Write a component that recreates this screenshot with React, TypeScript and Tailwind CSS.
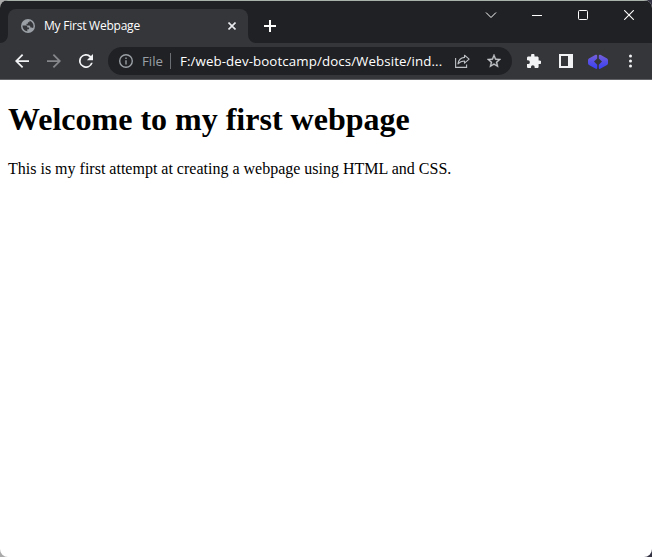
import React from 'react';

function Icon({ box, className, children }: { box: string; className: string; children: React.ReactNode }) {
  return (
    <svg viewBox={box} className={`block shrink-0 ${className}`} fill="currentColor">
      {children}
    </svg>
  );
}

function TabStrip() {
  return (
    <div className="flex h-[43px] border-t border-[#a9b1ab] bg-[#202124]">
      <div className="flex w-2 items-end">
        <svg viewBox="0 0 8 8" className="block size-2" fill="#35363a"><path d="M8 0v8H0a8 8 0 0 0 8-8z" /></svg>
      </div>
      <div className="mt-2 flex w-60 items-center rounded-t-lg bg-[#35363a] pl-[13px]">
        <Icon box="0 0 14 14" className="size-3.5 text-[#9aa0a6]">
          <circle cx="7" cy="7" r="7" />
          <path fill="#35363a" d="M1.500 6.600h3.200c1.300 0 1.700.9 1.700 1.900h1.700v1.800H6.300v2.100C3.600 12.200 1.500 9.700 1.500 6.600zM8.500 1.700c2.300.6 4 2.700 4 5.300 0 .9-.2 1.500-.5 2.100-.4-.5-.8-.7-1.500-.7H9.400c0-1.200-.6-1.800-1.700-1.800H5.500V4.800h1.400V3.300h1.600z" />
        </Icon>
        <span className="ml-[9px] w-[184px] whitespace-nowrap font-['Open_Sans',sans-serif] text-[12px] leading-4 tracking-[-0.23px] text-white">My First Webpage</span>
        <Icon box="0 0 8 8" className="size-2 text-[#e8eaed]">
          <path d="M.5.5l7 7m0-7l-7 7" stroke="currentColor" strokeWidth="1.6" />
        </Icon>
      </div>
      <div className="flex w-2 items-end">
        <svg viewBox="0 0 8 8" className="block size-2" fill="#35363a"><path d="M0 0v8h8a8 8 0 0 1-8-8z" /></svg>
      </div>
      <Icon box="0 0 12 12" className="mt-[19px] ml-2 size-3 text-white">
        <path d="M5 0h2v5h5v2H7v5H5V7H0V5h5z" />
      </Icon>
      <div className="ml-auto flex pt-[9px] pr-[18px] text-white">
        <Icon box="0 0 12 10" className="mr-[35px] h-[10px] w-3">
          <path d="M1 2.500l5 5 5-5" fill="none" stroke="currentColor" />
        </Icon>
        <Icon box="0 0 10 10" className="mr-9 size-[10px]">
          <path d="M0 5h10v1H0z" />
        </Icon>
        <Icon box="0 0 10 10" className="mr-9 size-[10px]">
          <rect x=".5" y=".5" width="9" height="9" rx="1" fill="none" stroke="currentColor" />
        </Icon>
        <Icon box="0 0 10 10" className="size-[10px]">
          <path d="M.2.2l9.600 9.600m0-9.600L.2 9.800" stroke="currentColor" strokeWidth="1.1" />
        </Icon>
      </div>
    </div>
  );
}

function AddressBar() {
  return (
    <div className="ml-[15px] flex h-7 w-[404px] items-center rounded-full bg-[#202124] pl-[11px] font-['Open_Sans',sans-serif] leading-5 whitespace-nowrap">
      <Icon box="2 2 20 20" className="size-3.5 text-[#9aa0a6]">
        <path d="M11 7h2v2h-2zm0 4h2v6h-2zm1-9a10 10 0 1 0 0 20 10 10 0 0 0 0-20zm0 18a8 8 0 1 1 0-16 8 8 0 0 1 0 16z" />
      </Icon>
      <span className="ml-[9px] w-7 text-[13.3px] text-[#9aa0a6]">File</span>
      <span className="h-4 w-px bg-[#6b6e72]" />
      <span className="ml-[9px] w-[275px] text-[13.3px] tracking-[0.1px] text-white">F:/web-dev-bootcamp/docs/Website/ind...</span>
      <Icon box="0 0 15 14" className="h-3.5 w-[15px] text-[#bdc1c6]">
        <path d="M.6 4v9.400h11V10.500" fill="none" stroke="currentColor" strokeWidth="1.1" />
        <path d="M9.500 1.200l4.600 4-4.600 4V7C6.700 7 4.800 7.800 3 9.800c.5-3.500 2.700-6 6.500-6.400z" fill="none" stroke="currentColor" strokeWidth="1.1" strokeLinejoin="round" />
      </Icon>
      <Icon box="2 2 20 20" className="ml-[17px] size-3.5 text-[#c4c7cb]">
        <path stroke="currentColor" strokeWidth=".5" d="M22 9.240l-7.190-.62L12 2 9.190 8.630 2 9.240l5.460 4.730L5.820 21 12 17.270 18.180 21l-1.630-7.030L22 9.240zM12 15.400l-3.760 2.270 1-4.280-3.320-2.880 4.380-.38L12 6.100l1.710 4.040 4.380.38-3.320 2.880 1 4.280L12 15.400z" />
      </Icon>
    </div>
  );
}

function Toolbar() {
  return (
    <div className="flex h-[37px] items-center border-b border-[#626366] bg-[#35363a] pl-[15px] text-[#f1f3f4]">
      <Icon box="4 4 16 16" className="size-3.5">
        <path d="M20 11H7.830l5.590-5.590L12 4l-8 8 8 8 1.410-1.410L7.830 13H20v-2z" />
      </Icon>
      <Icon box="4 4 16 16" className="ml-[18px] size-3.5 text-[#85878a]">
        <path d="M12 4l-1.410 1.410L16.170 11H4v2h12.170l-5.580 5.590L12 20l8-8-8-8z" />
      </Icon>
      <Icon box="4 4 16 16" className="ml-[18px] size-3.5">
        <path d="M17.650 6.350A8 8 0 1 0 19.730 14h-2.080A6 6 0 1 1 12 6c1.660 0 3.140.69 4.220 1.780L13 11h7V4l-2.350 2.350z" />
      </Icon>
      <AddressBar />
      <Icon box="2 1.500 20.500 20.500" className="ml-[15px] size-3.5">
        <path d="M20.500 11H19V7c0-1.100-.9-2-2-2h-4V3.500a2.500 2.500 0 0 0-5 0V5H4c-1.100 0-1.990.9-1.990 2v3.800H3.500a2.700 2.700 0 0 1 0 5.400H2V20c0 1.100.9 2 2 2h3.800v-1.500a2.700 2.700 0 0 1 5.400 0V22H17c1.100 0 2-.9 2-2v-4h1.500a2.500 2.500 0 0 0 0-5z" />
      </Icon>
      <Icon box="0 0 14 14" className="ml-[18px] size-3.5">
        <path fillRule="evenodd" d="M0 0h14v14H0zM2 2v10h7V2z" />
      </Icon>
      <Icon box="0 0 20 16" className="mt-px ml-[15px] h-4 w-5">
        <defs>
          <linearGradient id="chevrons" x1="0" y1="0" x2="0" y2="1">
            <stop offset="0" stopColor="#7560d8" />
            <stop offset="1" stopColor="#383ff5" />
          </linearGradient>
        </defs>
        <g fill="url(#chevrons)">
          <path d="M7.600 .8Q9.200 .2 9.200 1.800V4.400L6 7.600 9.200 10.800v3q0 1.600-1.400.9L1 10.900Q0 10.200 0 9.200V6.200Q0 5.200.9 4.600z" />
          <path d="M12.400 .8Q10.800 .2 10.800 1.800v2.600L14 7.600l-3.200 3.200v3q0 1.600 1.400.9l6.800-3.800q1-.7 1-1.700V6.200q0-1-.9-1.600z" />
        </g>
      </Icon>
      <Icon box="0 0 4 14" className="ml-5 h-3.5 w-1">
        <circle cx="2.500" cy="2" r="1.500" /><circle cx="2.500" cy="7" r="1.500" /><circle cx="2.500" cy="12" r="1.500" />
      </Icon>
    </div>
  );
}

export default function App() {
  return (
    <div className="h-[557px] w-[652px] overflow-hidden bg-[linear-gradient(90deg,#aaa_50%,#333344_50%)]">
      <div className="flex h-full flex-col overflow-hidden rounded-[8px] bg-white">
        <TabStrip />
        <Toolbar />
        <main className="px-2 pt-[21px] font-['Liberation_Serif',serif] text-black">
          <h1 className="text-[32px] leading-[37px] font-bold">Welcome to my first webpage</h1>
          <p className="mt-[22px] text-[16px] leading-[18px]">This is my first attempt at creating a webpage using HTML and CSS.</p>
        </main>
      </div>
    </div>
  );
}
